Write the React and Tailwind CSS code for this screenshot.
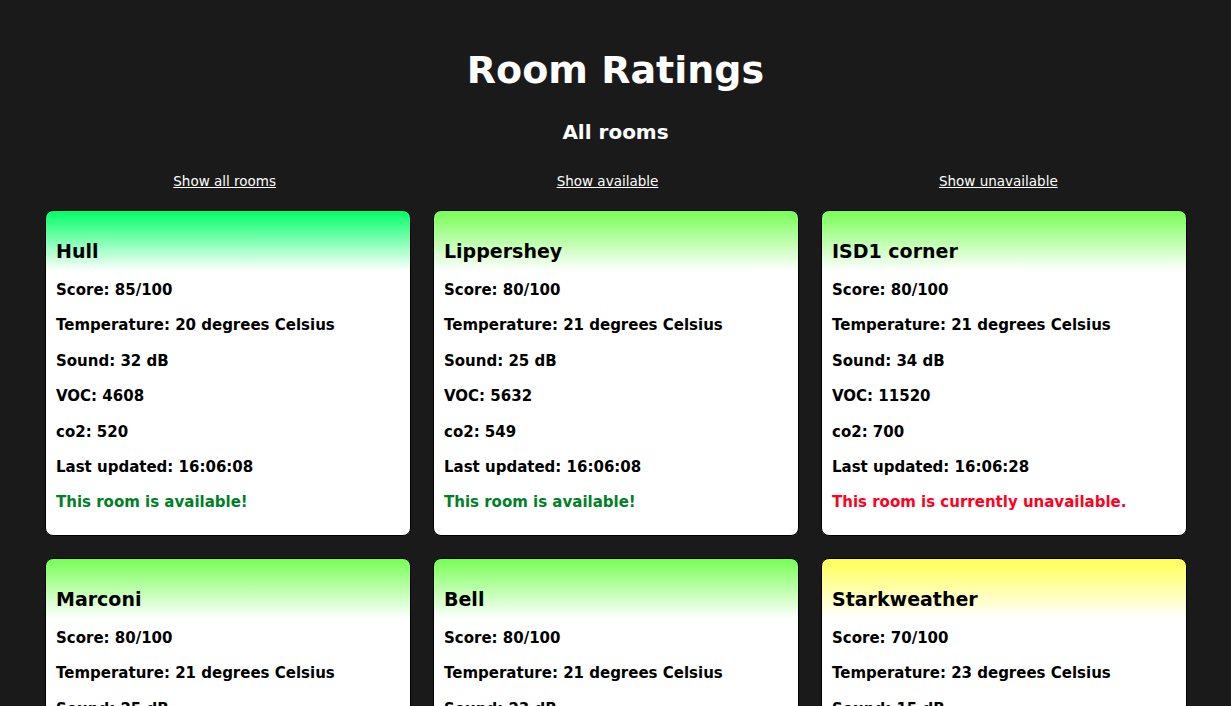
import React from "react";

// Room data shown on the ratings board
const rooms = [
  { name: "Hull", score: 85, temp: 20, sound: 32, voc: 4608, co2: 520, updated: "16:06:08", available: true, color: "#00ff66" },
  { name: "Lippershey", score: 80, temp: 21, sound: 25, voc: 5632, co2: 549, updated: "16:06:08", available: true, color: "#77ff55" },
  { name: "ISD1 corner", score: 80, temp: 21, sound: 34, voc: 11520, co2: 700, updated: "16:06:28", available: false, color: "#77ff55" },
  { name: "Marconi", score: 80, temp: 21, sound: 25, voc: 5120, co2: 530, updated: "16:06:08", available: true, color: "#77ff55" },
  { name: "Bell", score: 80, temp: 21, sound: 23, voc: 5376, co2: 540, updated: "16:06:08", available: true, color: "#77ff55" },
  { name: "Starkweather", score: 70, temp: 23, sound: 15, voc: 6144, co2: 610, updated: "16:06:08", available: false, color: "#ffff55" },
];

const RoomCard = ({ room }) => {
  return (
    <div
      className="rounded-[8px] border border-black bg-white px-[10px] pt-[10px] pb-[6px] text-black"
      style={{ backgroundImage: `linear-gradient(to bottom, ${room.color}, #ffffff 60px)` }}
    >
      <h2 className="mt-[18px] mb-[18px] text-[19px] leading-[24px] font-bold">{room.name}</h2>
      <p className="my-4 text-[15px] leading-[19.4px] font-bold">Score: {room.score}/100</p>
      <p className="my-4 text-[15px] leading-[19.4px] font-bold">Temperature: {room.temp} degrees Celsius</p>
      <p className="my-4 text-[15px] leading-[19.4px] font-bold">Sound: {room.sound} dB</p>
      <p className="my-4 text-[15px] leading-[19.4px] font-bold">VOC: {room.voc}</p>
      <p className="my-4 text-[15px] leading-[19.4px] font-bold">co2: {room.co2}</p>
      <p className="my-4 text-[15px] leading-[19.4px] font-bold">Last updated: {room.updated}</p>
      {room.available ? (
        <p className="my-4 text-[15px] leading-[19.4px] font-bold text-[#008024]">This room is available!</p>
      ) : (
        <p className="my-4 text-[15px] leading-[19.4px] font-bold text-[#ff0022]">This room is currently unavailable.</p>
      )}
    </div>
  );
};

export default function App() {
  return (
    <div className="min-h-screen bg-[#1a1a1a] font-['DejaVu_Sans',sans-serif] text-white">
      <h1 className="pt-[44px] text-center text-[38px] leading-[53px] font-bold">Room Ratings</h1>
      <h2 className="mt-[22px] text-center text-[20px] leading-[27px] font-bold">All rooms</h2>

      {/* Filter links */}
      <div className="mx-[33px] mt-[27px] flex justify-around text-[13.5px] leading-[17px] font-medium">
        <a href="#" className="underline">Show all rooms</a>
        <a href="#" className="underline">Show available</a>
        <a href="#" className="underline">Show unavailable</a>
      </div>

      <div className="mt-[20px] grid grid-cols-3 gap-[22px] pl-[45px] pr-[44px] pb-8">
        {rooms.map((room) => (
          <RoomCard key={room.name} room={room} />
        ))}
      </div>
    </div>
  );
}
